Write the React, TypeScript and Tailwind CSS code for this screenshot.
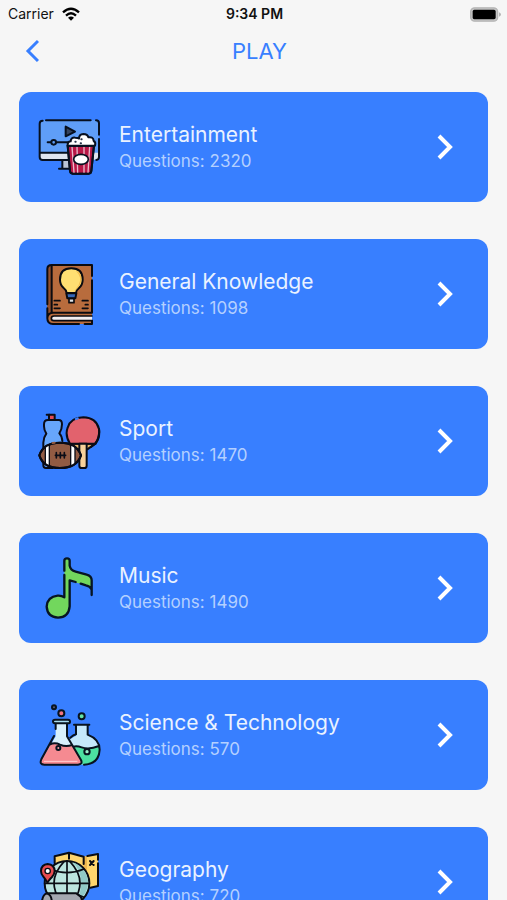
import type { ReactNode } from "react"

function EntertainmentIcon() {
  return (
    <svg viewBox="21 18 192 192" className="size-16 shrink-0" fill="none" stroke="#07101f" strokeWidth="6" strokeLinecap="round" strokeLinejoin="round" aria-hidden="true">
      <path d="M29 42q0-8 8-8h162q8 0 8 8v90H29z" fill="#5f9ef8" stroke="none" />
      <path d="M29 131h178v14q0 7-7 7H36q-7 0-7-7z" fill="#dfe5ef" stroke="none" />
      <path d="M97 154h22v25H97z" fill="#b9c4d6" stroke="none" />
      <path d="M48 34h134M38 35q-9 0-9 9v100q0 9 9 9h78M198 34q9 0 9 9v34M207 90v54q0 8-8 9M30 131h84M97 154v24M87 179h30" />
      <path d="M107 53v29l28-14z" fill="#34435e" />
      <path d="M53 100h10M79 100h36" />
      <circle cx="71" cy="100" r="7" fill="#5f9ef8" />
      <path d="M113 110h79l-8 76q-1 8-8 8h-48q-7 0-8-8z" fill="#b81646" />
      <path d="M126 113l6 78M141 113l2 78M162 113v78M179 113l-5 78" stroke="#e9b9cb" strokeWidth="4" />
      <path d="M113 110h79l-8 76q-1 8-8 8h-48q-7 0-8-8z" />
      <ellipse cx="153" cy="151" rx="22" ry="15" fill="#fff" strokeWidth="5" />
      <path d="M113 110q-1-12 9-13 1-13 14-11 8 0 11 3 0-13 13-14 13 0 15 10 15-3 16 11 7 3 4 14z" fill="#fff" />
      <path d="M136 98h1M152 103h1M154 91h1" stroke="#27334a" />
    </svg>
  )
}

function KnowledgeIcon() {
  return (
    <svg viewBox="21 22 192 192" className="size-16 shrink-0" fill="none" stroke="#0b0b10" strokeWidth="6" strokeLinecap="round" strokeLinejoin="round" aria-hidden="true">
      <path d="M52 43q0-12 12-12h122v177H67q-15 0-15-15z" fill="#b86c3d" stroke="none" />
      <path d="M52 43q0-12 13-12v145q-8 1-13 8z" fill="#93502d" stroke="none" />
      <path d="M186 64V31H65q-13 0-13 12v106M52 161v30q0 17 17 17h78M164 208h22v-10M186 77v97M65 31v144M186 174H70q-18 0-18 17" />
      <path d="M186 184H72q-8 0-8 7t8 7h114z" fill="#f3eff0" stroke="none" />
      <path d="M186 184H72q-8 0-8 7t8 7h114" strokeWidth="5" />
      <path d="M110 115q-1-9-9-15-11-10-11-25 0-34 34-34t34 34q0 15-11 25-9 7-9 15z" fill="#ffdf72" />
      <path d="M138 49q20 19 8 42-8 10-14 21 25-23 22-45-3-14-16-18z" fill="#f2bb4e" stroke="none" />
      <path d="M109 116h30l-3 15h-24z" fill="#3568b8" />
      <path d="M117 132h15v12h-15z" fill="#dfe5e8" strokeWidth="5" />
      <path d="M73 138h17M73 150h9M73 161h17M157 138h17M166 150h8M157 161h17" strokeWidth="5" />
    </svg>
  )
}

function SportIcon() {
  return (
    <svg viewBox="21 27 192 192" className="size-16 shrink-0" fill="none" stroke="#0b0c16" strokeWidth="6" strokeLinecap="round" strokeLinejoin="round" aria-hidden="true">
      <path d="M57 60V44h17v16" fill="#e34a56" />
      <path d="M50 44h8" />
      <path d="M51 60h33q12 0 12 12 0 16-8 27 7 8 10 25v70q0 10-10 10H48q-7 0-7-9v-65q0-17 8-29-7-12-7-28 0-13 9-13z" fill="#67a6fb" stroke="none" />
      <path d="M40 147v-19q1-17 9-27-7-10-7-22M40 185v11q0 8 8 8h20M42 79v-6q0-13 12-13h32q10 0 10 13 0 16-8 27 8 8 9 23" />
      <path d="M119 131h77l-24 17h-37z" fill="#edb96e" />
      <path d="M120 131q-16-26-7-48 9-30 47-31 39 1 47 35 4 23-10 44z" fill="#e2626d" />
      <path d="M207 87q4 37-24 54" />
      <path d="M148 131h22v66q0 7-7 7h-8q-7 0-7-7z" fill="#f8d19b" />
      <path d="M143 55l-5 2" stroke="#387fff" strokeWidth="7" />
      <path d="M28 166q12-38 62-38t63 38q-13 38-63 38t-62-38z" fill="#925b43" />
      <path d="M46 140l12-7v64l-12-6zM122 133l13 7v52l-13 5z" fill="#fff" stroke="none" />
      <path d="M46 141v49M58 134v63M122 134v63M135 141v49" strokeWidth="4" />
      <path d="M28 166q12-38 62-38t63 38q-13 38-63 38t-62-38z" />
      <path d="M76 166h31M79 158v16M91 158v16M103 158v16" strokeWidth="5" />
      <path d="M68 129l6-1" stroke="#925b43" />
    </svg>
  )
}

function MusicIcon() {
  return (
    <svg viewBox="21 24 192 192" className="size-16 shrink-0" fill="none" stroke="#071523" strokeWidth="7" strokeLinecap="round" strokeLinejoin="round" aria-hidden="true">
      <path d="M103 148V38q0-7 8-7t8 7v15q2 14 18 18l34 9q15 4 15 18v28q-2-10-16-14l-51-13v76q-2 34-34 34-33-2-35-32 2-33 36-34 10 0 17 5z" fill="#72d75d" stroke="none" />
      <path d="M103 68V38q0-7 8-7t8 7v15q2 14 18 18l33 9q15 4 15 17v44M103 81v67q-9-6-20-5-31 3-33 33 2 31 34 33 32-1 35-34V97l18 5M152 107l16 5q13 3 17 13" />
    </svg>
  )
}

function ScienceIcon() {
  return (
    <svg viewBox="21 22 192 192" className="size-16 shrink-0" fill="none" stroke="#08131f" strokeWidth="6" strokeLinecap="round" strokeLinejoin="round" aria-hidden="true">
      <circle cx="72" cy="35" r="6" fill="#5a5a73" />
      <circle cx="94" cy="53" r="9" fill="#f37582" />
      <circle cx="155" cy="62" r="9" fill="#64e3a5" />
      <path d="M138 88h35v31q36 14 36 43 0 43-47 45-25 0-40-19l-15-36q5-22 31-32z" fill="#c5e9fb" stroke="none" />
      <path d="M119 155q14-8 31-2 27 10 58-3 7 52-44 57-27 1-40-20z" fill="#4ce0a1" stroke="none" />
      <path d="M132 87h46M138 89v25M173 89v28q36 14 36 45-2 43-47 45M121 126q9-8 17-10M130 153q11-3 25 2 22 8 52-4" />
      <circle cx="171" cy="168" r="8" fill="#9af2cd" />
      <path d="M77 84h34v38l42 72q5 13-8 13H43q-15-1-8-14l42-71z" fill="#d8f0fc" stroke="none" />
      <path d="M61 147q15-7 29 0 20 8 38 0l27 48q4 12-10 12H43q-15-1-8-14z" fill="#f58a91" stroke="none" />
      <path d="M69 77q0-5 6-5h39q6 0 6 6 0 5-6 5H75q-6 0-6-6z" fill="#a9def1" />
      <path d="M77 84v16M72 121l-38 70q-7 16 9 16h101q15-1 9-14l-42-71V84M59 147q15-8 31 0 18 8 36 1" />
      <path d="M43 197h98" stroke="#ffd0d2" strokeWidth="3" />
      <circle cx="85" cy="157" r="6" fill="#f9a0a6" />
    </svg>
  )
}

function GeographyIcon() {
  return (
    <svg viewBox="21 27 192 192" className="size-16 shrink-0" fill="none" stroke="#0a0c13" strokeWidth="6" strokeLinecap="round" strokeLinejoin="round" aria-hidden="true">
      <path d="M74 46l43-11 44 12 43-8v96l-43 10-87-13z" fill="#ffd66d" stroke="none" />
      <path d="M161 47l10-2v96l-10 2z" fill="#efb84f" stroke="none" />
      <path d="M74 67V46l43-11 44 12v22M117 35v18M172 45l32-6v17M204 67v68l-23 5" />
      <path d="M180 60l11 12M191 60l-11 12" />
      <circle cx="111" cy="127" r="67" fill="#bce5df" />
      <path d="M127 64q43 14 48 62-5 41-38 56 17-27 17-56-2-43-27-62z" fill="#91c9c7" stroke="none" />
      <path d="M111 60v134M44 127h134M60 84q50 22 102 0M60 169q50-22 102 0M102 62q-60 64 0 130M120 62q60 64 0 130" strokeWidth="5" />
      <path d="M52 125q-5-10-12-18-7-8-7-17 1-20 20-21 20 1 21 21 0 9-8 18-9 9-14 17z" fill="#e84c50" />
      <circle cx="53" cy="90" r="8" fill="#fff" strokeWidth="4" />
      <path d="M50 157h89l12 9q15 26-6 42H55q-20-3-19-25 1-21 14-26z" fill="#a4a8b0" />
      <path d="M50 157q16 5 15 25-2 21-13 25" />
    </svg>
  )
}

const categories: { name: string; questions: number; icon: ReactNode }[] = [
  { name: "Entertainment", questions: 2320, icon: <EntertainmentIcon /> },
  { name: "General Knowledge", questions: 1098, icon: <KnowledgeIcon /> },
  { name: "Sport", questions: 1470, icon: <SportIcon /> },
  { name: "Music", questions: 1490, icon: <MusicIcon /> },
  { name: "Science & Technology", questions: 570, icon: <ScienceIcon /> },
  { name: "Geography", questions: 720, icon: <GeographyIcon /> },
]

function StatusBar() {
  return (
    <div className="grid h-7 shrink-0 grid-cols-3 items-center pr-1.5 pl-2 text-sm text-[#111]">
      <div className="flex items-center gap-2">
        <span>Carrier</span>
        <svg viewBox="0 0 54 42" className="h-3.5 w-[18px]" fill="none" stroke="#000" strokeWidth="7" aria-hidden="true">
          <path d="M3 16q24-22 48 0M12 26q15-14 30 0" />
          <path d="M18 32q9-7 18 0l-9 9z" fill="#000" stroke="none" />
        </svg>
      </div>
      <span className="text-center font-semibold">9:34 PM</span>
      <svg viewBox="0 0 93 44" className="h-[15px] w-[31px] justify-self-end" aria-hidden="true">
        <rect x="2" y="2" width="81" height="40" rx="12" fill="#c4c4c4" stroke="#b4b4b4" strokeWidth="4" />
        <rect x="8" y="8" width="69" height="28" rx="5" fill="#000" />
        <path d="M87 15q6 3 6 7t-6 7z" fill="#b4b4b4" />
      </svg>
    </div>
  )
}

export default function App() {
  return (
    <div className="flex h-screen flex-col overflow-hidden bg-[#f6f6f6] font-['Inter',sans-serif]">
      <StatusBar />
      <header className="grid h-[46px] shrink-0 grid-cols-[40px_1fr_28px] items-center px-3 text-[#387fff]">
        <button type="button" aria-label="Back" className="flex size-10 items-center justify-center">
          <svg viewBox="0 0 14 24" className="h-6 w-3.5" fill="none" stroke="currentColor" strokeWidth="3" aria-hidden="true">
            <path d="M13 2 3 12l10 10" />
          </svg>
        </button>
        <h1 className="text-center text-[22px]">PLAY</h1>
      </header>
      <main className="flex min-h-0 flex-1 flex-col gap-[37px] overflow-y-auto px-[19px] pt-[18px] pb-9 [scrollbar-width:none]">
        {categories.map((category) => (
          <button
            key={category.name}
            type="button"
            className="flex h-[110px] shrink-0 items-center rounded-xl bg-[#387fff] pr-[35px] pl-[18px] text-left"
          >
            {category.icon}
            <span className="ml-[18px] flex flex-1 flex-col">
              <span className="text-[21px] leading-7 text-[#eaf2ff]">{category.name}</span>
              <span className="text-[17px] leading-6 text-[#b4d0ff]">Questions: {category.questions}</span>
            </span>
            <svg viewBox="0 0 16 26" className="h-[26px] w-4 shrink-0" fill="none" stroke="#fff" strokeWidth="4" aria-hidden="true">
              <path d="M2 2l11 11L2 24" />
            </svg>
          </button>
        ))}
      </main>
    </div>
  )
}
